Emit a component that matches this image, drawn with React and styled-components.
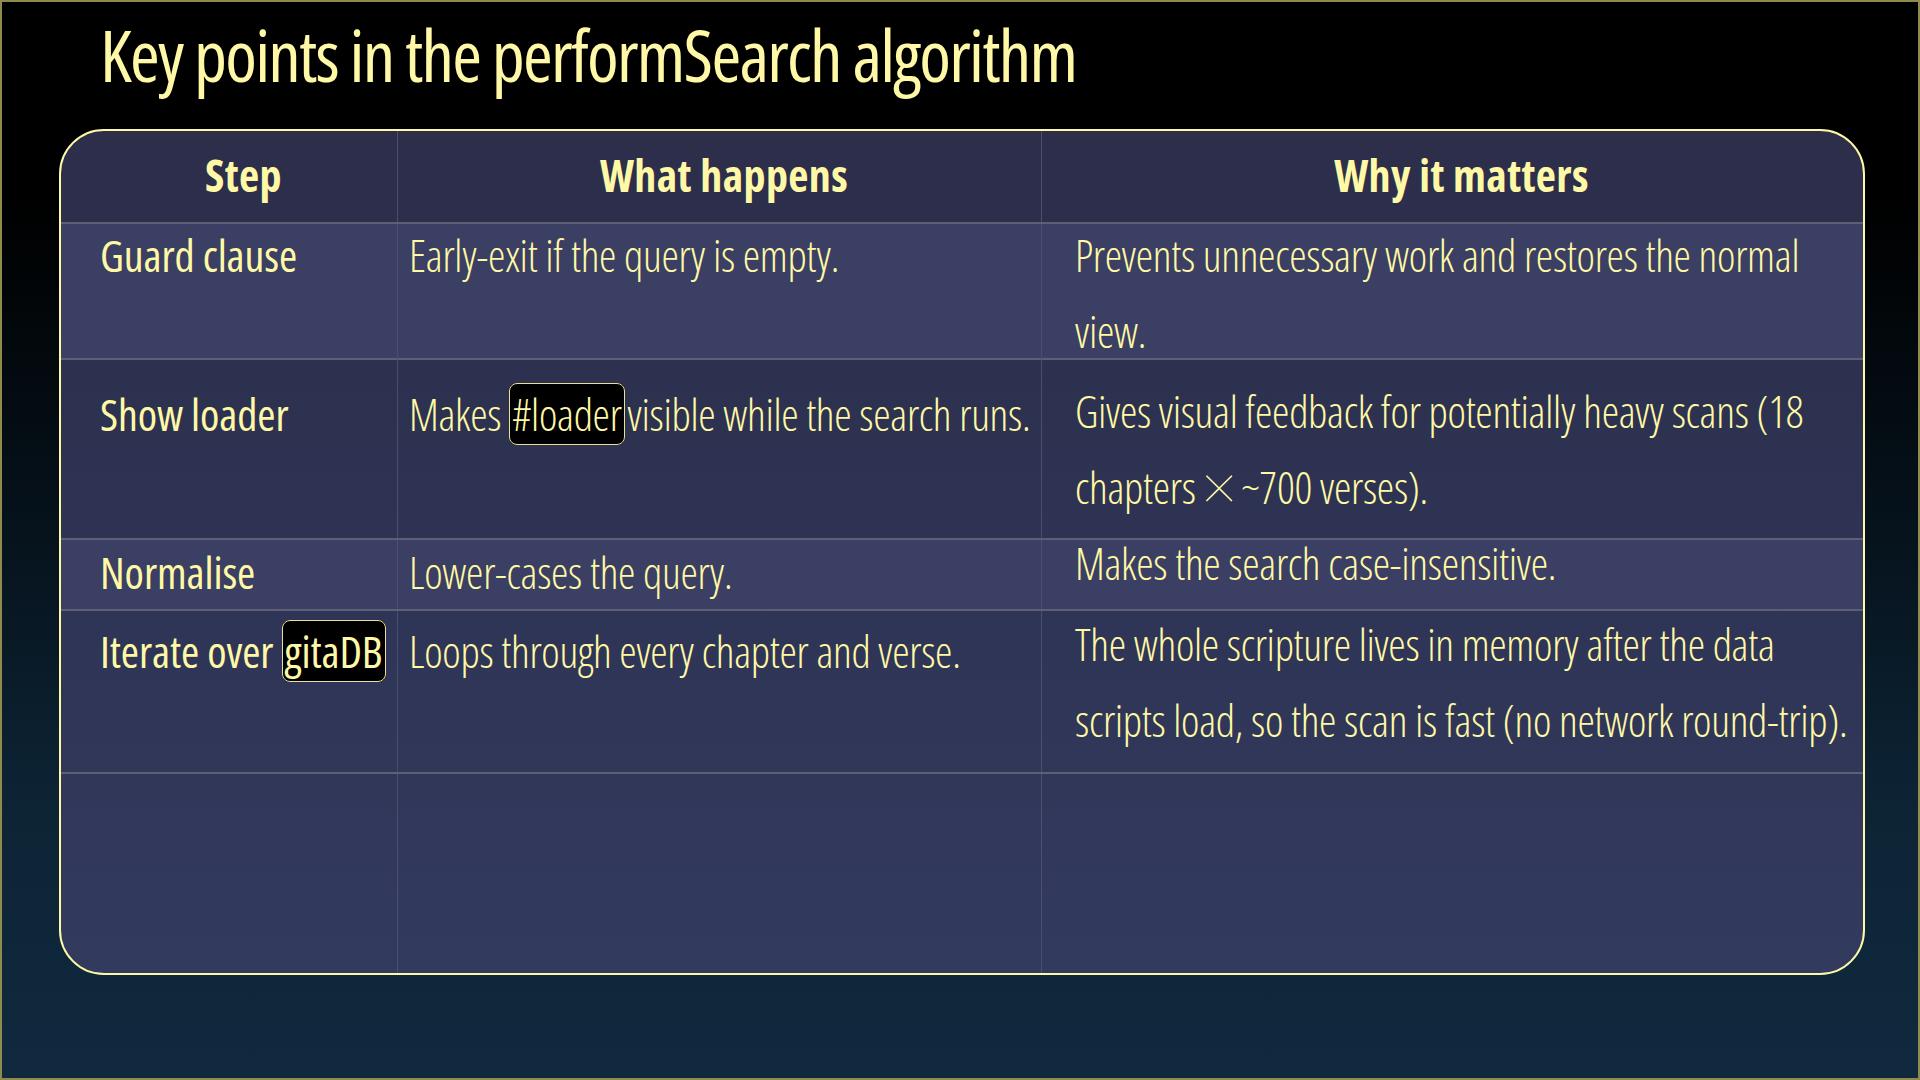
import React from 'react';
import styled, { createGlobalStyle } from 'styled-components';

const GlobalStyle = createGlobalStyle`
  html, body {
    margin: 0;
    padding: 0;
  }
  body {
    font-family: "Open Sans", "Noto Sans", sans-serif;
    font-stretch: 75%;
  }
`;

const yellow = '#fff8a6';

const Page = styled.div`
  box-sizing: border-box;
  width: 100vw;
  height: 100vh;
  border: 2px solid #8f8b4c;
  padding: 3px 53px 0 57px;
  display: flex;
  flex-direction: column;
  background: linear-gradient(180deg, #000 0%, #000 18%, #06131d 50%, #0d2435 75%, #10293e 100%);
  color: ${yellow};
`;

const Title = styled.h1`
  margin: 0 0 0 41px;
  font-size: 72px;
  font-weight: 400;
  letter-spacing: -1.75px;
  line-height: 98px;
`;

const Table = styled.div`
  box-sizing: border-box;
  flex: 1;
  margin: 26px 0 103px;
  display: flex;
  flex-direction: column;
  border: 2px solid ${yellow};
  border-radius: 45px;
  overflow: hidden;
  background: linear-gradient(180deg, #2c2e4a 0%, #2e3353 45%, #323a5e 100%);
`;

const Row = styled.div`
  box-sizing: border-box;
  display: grid;
  grid-template-columns: 337px 644px 1fr;
  height: ${(p) => p.$h}px;
  flex: ${(p) => (p.$fill ? 1 : 'none')};
  border-bottom: ${(p) => (p.$fill ? 'none' : '2px solid #5d6074')};
  background: ${(p) => (p.$shade ? '#3a3f63' : 'transparent')};
`;

const pads = ['0 10px 0 39px', '0 2px 0 11px', '0 15px 0 33px'];

const Cell = styled.div`
  box-sizing: border-box;
  padding: ${(p) => pads[p.$col]};
  border-right: ${(p) => (p.$col < 2 ? '1px solid #4b4f6d' : 'none')};
  min-width: 0;
`;

const HeadCell = styled(Cell)`
  display: flex;
  align-items: center;
  justify-content: center;
  padding-bottom: 3px;
  font-size: 44px;
  font-weight: 700;
  letter-spacing: 0.4px;
`;

const Text = styled.div`
  margin-top: ${(p) => p.$lift}px;
  font-size: 44px;
  line-height: ${(p) => (p.$tall ? 76 : 60)}px;
  font-weight: ${(p) => (p.$strong ? 400 : 300)};
  letter-spacing: ${(p) => (p.$strong ? '-0.1px' : '-0.3px')};
  white-space: nowrap;
`;

const Code = styled.span`
  padding: 0 2px;
  margin-right: 3px;
  background: #000;
  border: 1px solid #e9e293;
  border-radius: 8px;
`;

const Times = styled.span`
  font-family: "Noto Sans", "DejaVu Sans", sans-serif;
  font-stretch: 100%;
  font-weight: 100;
  font-size: 62px;
  line-height: 0;
  vertical-align: -6px;
  margin: 0 -3px 0 -2px;
`;

const rows = [
  {
    step: 'Guard clause',
    what: 'Early-exit if the query is empty.',
    why: ['Prevents unnecessary work and restores the normal', 'view.'],
    h: 136,
    lift: 1,
    whyLift: -7,
    shade: true,
  },
  {
    step: 'Show loader',
    what: (
      <>
        Makes <Code>#loader</Code>visible while the search runs.
      </>
    ),
    why: [
      'Gives visual feedback for potentially heavy scans (18',
      <>
        chapters <Times>×</Times> ~700 verses).
      </>,
    ],
    h: 180,
    lift: 24,
    whyLift: 13,
  },
  {
    step: 'Normalise',
    what: 'Lower-cases the query.',
    why: ['Makes the search case-insensitive.'],
    h: 71,
    lift: 2,
    whyLift: -15,
    shade: true,
  },
  {
    step: (
      <>
        Iterate over <Code>gitaDB</Code>
      </>
    ),
    what: 'Loops through every chapter and verse.',
    why: [
      'The whole scripture lives in memory after the data',
      'scripts load, so the scan is fast (no network round-trip).',
    ],
    h: 163,
    lift: 10,
    whyLift: -5,
  },
];

const App = () => {
  return (
    <>
      <GlobalStyle />
      <Page>
        <Title>Key points in the performSearch algorithm</Title>
        <Table>
          <Row $h={93}>
            <HeadCell $col={0}>Step</HeadCell>
            <HeadCell $col={1}>What happens</HeadCell>
            <HeadCell $col={2}>Why it matters</HeadCell>
          </Row>
          {rows.map((r, i) => (
            <Row key={i} $h={r.h} $shade={r.shade}>
              <Cell $col={0}>
                <Text $lift={r.lift} $strong>
                  {r.step}
                </Text>
              </Cell>
              <Cell $col={1}>
                <Text $lift={r.lift}>{r.what}</Text>
              </Cell>
              <Cell $col={2}>
                <Text $lift={r.whyLift} $tall>
                  {r.why.map((line, j) => (
                    <React.Fragment key={j}>
                      {j > 0 && <br />}
                      {line}
                    </React.Fragment>
                  ))}
                </Text>
              </Cell>
            </Row>
          ))}
          <Row $fill>
            <Cell $col={0} />
            <Cell $col={1} />
            <Cell $col={2} />
          </Row>
        </Table>
      </Page>
    </>
  );
};

export default App;
